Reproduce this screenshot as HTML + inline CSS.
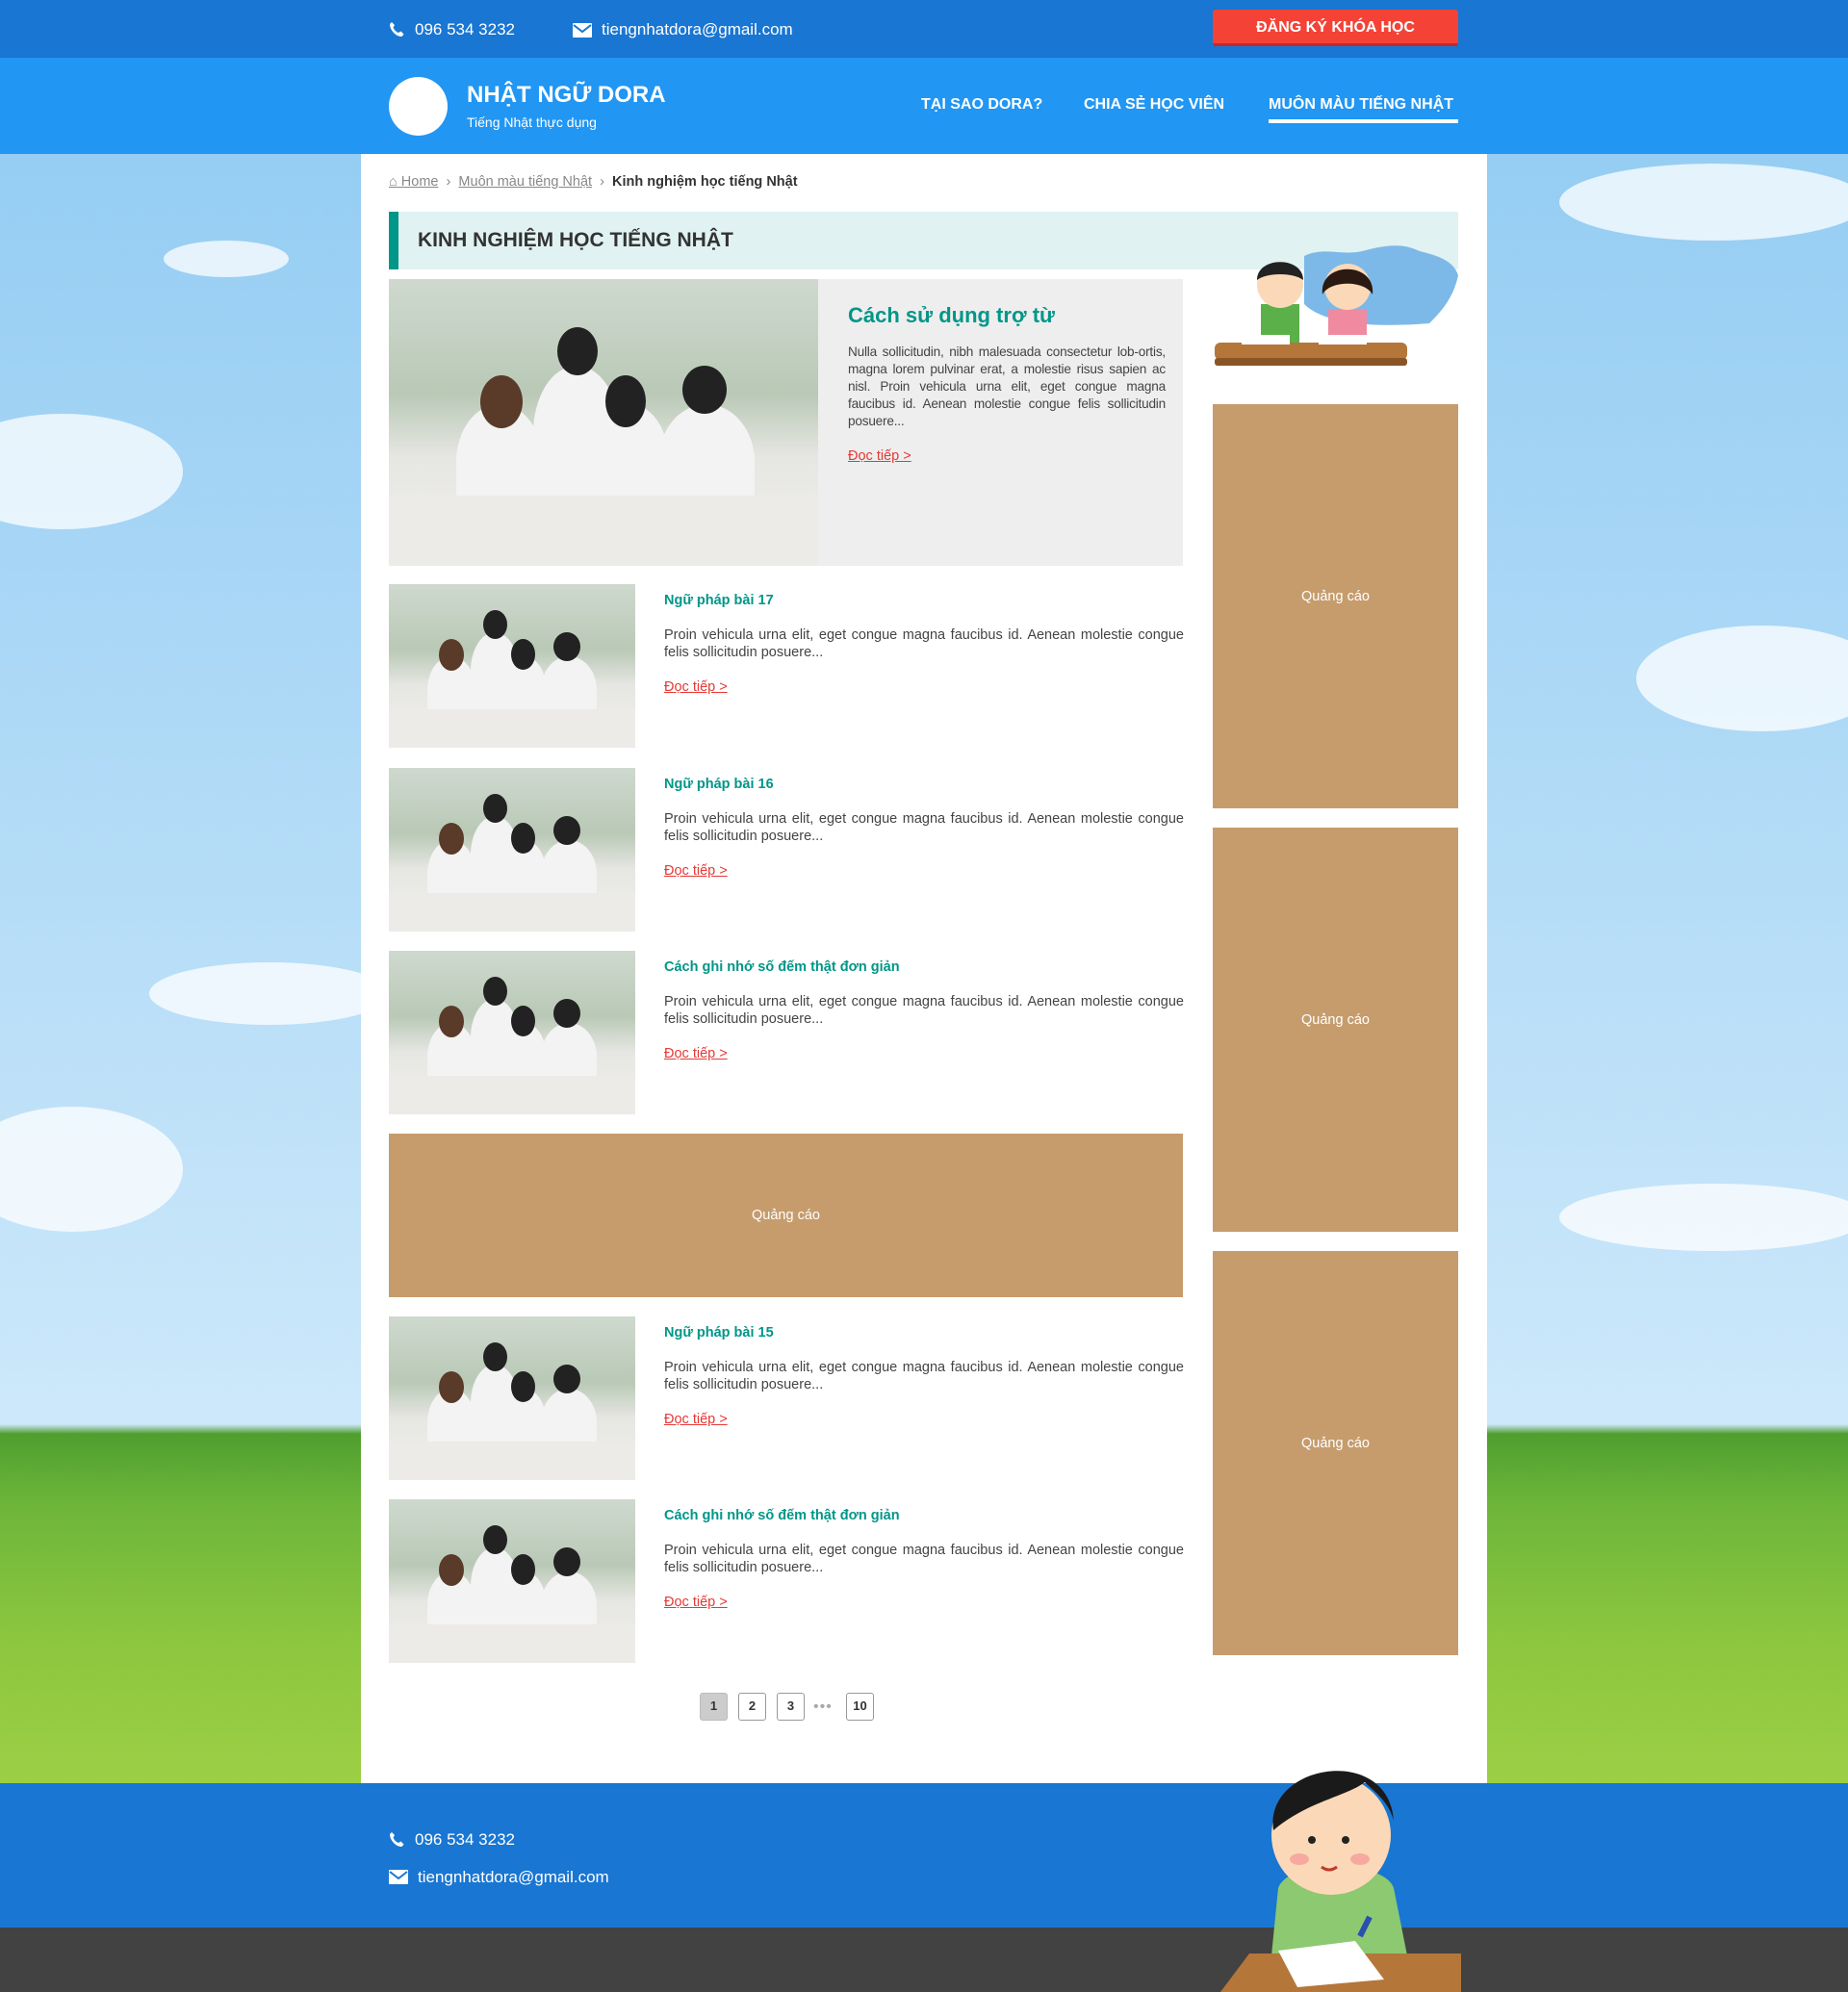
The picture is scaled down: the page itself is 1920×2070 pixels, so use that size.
<!DOCTYPE html>
<html><head><meta charset="utf-8"><style>
*{margin:0;padding:0;box-sizing:border-box}
body{width:1920px;height:2070px;position:relative;overflow:hidden;font-family:"Liberation Sans",sans-serif;background:linear-gradient(#8fcaf2 0,#b4dcf7 900px,#cde8fa 1480px,#4f9e2f 1490px,#6cb53a 1560px,#8cc63f 1700px,#9ccf45 1853px)}
.abs{position:absolute}
.cloud{position:absolute;background:#fff;border-radius:50%;opacity:.75}
.top{left:0;top:0;width:1920px;height:60px;background:#1976d2;color:#fff;font-size:17px}
.hdr{left:0;top:60px;width:1920px;height:100px;background:#2196f3;color:#fff}
.wrap{left:375px;top:160px;width:1170px;height:1693px;background:#fff}
.btn{left:1260px;top:10px;width:255px;height:38px;background:#f44336;border-bottom:3px solid #c62828;border-radius:3px;color:#fff;font-weight:bold;font-size:16px;text-align:center;line-height:38px}
.nav{top:100px;font-size:16px;font-weight:bold;color:#fff}
.photo{background:linear-gradient(180deg,#cfd9cf 0,#b9c9b6 40%,#e6e6e2 62%,#f1f0ec 100%);overflow:hidden}
.photo .p{position:absolute;border-radius:50% 50% 10% 10%;background:#f3f3f3}
.photo .h{position:absolute;border-radius:50%;background:#222}
.t{color:#009688;font-weight:bold}
.para{color:#444;font-size:14.5px;line-height:18px}
.more{color:#e53935;text-decoration:underline;font-size:14.5px}
.ad{background:#c69c6d;color:#fff;font-size:14.5px;display:flex;align-items:center;justify-content:center}
.pg{top:1759px;width:29px;height:29px;border:1.5px solid #999;border-radius:3px;font-size:13px;font-weight:bold;color:#333;text-align:center;line-height:26px}
</style></head><body>
<div class="cloud" style="left:170px;top:250px;width:130px;height:38px"></div>
<div class="cloud" style="left:-60px;top:430px;width:250px;height:120px"></div>
<div class="cloud" style="left:155px;top:1000px;width:250px;height:65px"></div>
<div class="cloud" style="left:-40px;top:1150px;width:230px;height:130px"></div>
<div class="cloud" style="left:1620px;top:170px;width:320px;height:80px"></div>
<div class="cloud" style="left:1700px;top:650px;width:260px;height:110px"></div>
<div class="cloud" style="left:1620px;top:1230px;width:320px;height:70px"></div>

<div class="abs top">
 <svg class="abs" style="left:404px;top:22px" width="16" height="17" viewBox="0 0 16 17"><path d="M3 1l3 3-1.5 2.5c1 2.5 3 4.5 5.5 5.5L12.5 10.5l3 3-2 2.5C7 16 1 9 1 3z" fill="#fff"/></svg>
 <div class="abs" style="left:431px;top:21px">096 534 3232</div>
 <svg class="abs" style="left:595px;top:24px" width="20" height="15" viewBox="0 0 20 15"><rect width="20" height="15" rx="1" fill="#fff"/><path d="M1 2l9 7 9-7" stroke="#1976d2" stroke-width="2" fill="none"/></svg>
 <div class="abs" style="left:625px;top:21px">tiengnhatdora@gmail.com</div>
 <div class="abs btn">ĐĂNG KÝ KHÓA HỌC</div>
</div>
<div class="abs hdr">
 <div class="abs" style="left:404px;top:20px;width:61px;height:61px;border-radius:50%;background:#fff"></div>
 <div class="abs" style="left:485px;top:25px;font-size:24px;font-weight:bold">NHẬT NGỮ DORA</div>
 <div class="abs" style="left:485px;top:59px;font-size:14px">Tiếng Nhật thực dụng</div>
</div>
<div class="abs nav" style="left:957px">TẠI SAO DORA?</div>
<div class="abs nav" style="left:1126px">CHIA SẺ HỌC VIÊN</div>
<div class="abs nav" style="left:1318px">MUÔN MÀU TIẾNG NHẬT</div>
<div class="abs" style="left:1318px;top:124px;width:197px;height:4px;background:#fff"></div>

<div class="abs wrap"></div>
<div class="abs" style="left:404px;top:181px;font-size:14.5px;color:#888"><span style="text-decoration:underline">⌂ Home</span> &nbsp;›&nbsp; <span style="text-decoration:underline">Muôn màu tiếng Nhật</span> &nbsp;›&nbsp; <span style="color:#333;font-weight:bold">Kinh nghiệm học tiếng Nhật</span></div>
<div class="abs" style="left:404px;top:220px;width:1111px;height:60px;background:#e0f2f1;border-left:10px solid #009688"></div>
<div class="abs" style="left:434px;top:238px;font-size:21px;font-weight:bold;color:#333">KINH NGHIỆM HỌC TIẾNG NHẬT</div>
<svg class="abs" style="left:1260px;top:236px" width="255" height="158" viewBox="0 0 255 158">
<path d="M95 30c20-10 40 0 60-5s40-10 60 0c20 5 35 10 40 25-5 25-20 40-30 50-60 5-110 0-130-20z" fill="#7cb9e8"/>
<rect x="2" y="120" width="200" height="18" rx="6" fill="#b5763a"/><rect x="2" y="136" width="200" height="8" rx="3" fill="#8a5526"/>
<path d="M50 80h40v40H50z" fill="#5bb04a"/><circle cx="70" cy="60" r="24" fill="#fbd9b8"/><path d="M46 55c0-25 48-25 48 0-10-8-38-8-48 0z" fill="#222"/>
<path d="M120 85h40v35h-40z" fill="#f08aa0"/><circle cx="140" cy="62" r="24" fill="#fbd9b8"/><path d="M114 70c-4-35 56-35 52 0-8-15-44-15-52 0z" fill="#2a1a12"/>
<rect x="30" y="112" width="50" height="10" fill="#fff"/><rect x="110" y="112" width="50" height="10" fill="#fff"/>
</svg>
<div class="abs photo" style="left:404px;top:290px;width:446px;height:298px">
 <div class="p" style="left:70px;top:130px;width:90px;height:120px"></div><div class="h" style="left:95px;top:100px;width:44px;height:55px;background:#5a3a28"></div>
 <div class="p" style="left:150px;top:90px;width:90px;height:140px"></div><div class="h" style="left:175px;top:50px;width:42px;height:50px"></div>
 <div class="p" style="left:210px;top:130px;width:80px;height:110px"></div><div class="h" style="left:225px;top:100px;width:42px;height:54px"></div>
 <div class="p" style="left:280px;top:130px;width:100px;height:120px"></div><div class="h" style="left:305px;top:90px;width:46px;height:50px"></div>
 <div class="abs" style="left:0;top:225px;width:446px;height:73px;background:#ecebe7"></div>
</div>
<div class="abs" style="left:850px;top:290px;width:379px;height:298px;background:#eee"></div>
<div class="abs t" style="left:881px;top:315px;font-size:22px">Cách sử dụng trợ từ</div>
<div class="abs para" style="left:881px;top:357px;width:330px;text-align:justify;font-size:13.6px;letter-spacing:-0.2px">Nulla sollicitudin, nibh malesuada consectetur lob-ortis, magna lorem pulvinar erat, a molestie risus sapien ac nisl. Proin vehicula urna elit, eget congue magna faucibus id. Aenean molestie congue felis sollicitudin posuere...</div>
<div class="abs more" style="left:881px;top:466px">Đọc tiếp &gt;</div>

<div id="items"></div>
<script>
var tops=[607,798,988,1368,1558],titles=["Ngữ pháp bài 17","Ngữ pháp bài 16","Cách ghi nhớ số đếm thật đơn giản","Ngữ pháp bài 15","Cách ghi nhớ số đếm thật đơn giản"],h="";
tops.forEach(function(t,i){
h+='<div class="abs photo" style="left:404px;top:'+t+'px;width:256px;height:170px"><div class="p" style="left:40px;top:75px;width:50px;height:70px"></div><div class="h" style="left:52px;top:57px;width:26px;height:33px;background:#5a3a28"></div><div class="p" style="left:85px;top:50px;width:50px;height:80px"></div><div class="h" style="left:98px;top:27px;width:25px;height:30px"></div><div class="p" style="left:118px;top:75px;width:45px;height:65px"></div><div class="h" style="left:127px;top:57px;width:25px;height:32px"></div><div class="p" style="left:158px;top:75px;width:58px;height:70px"></div><div class="h" style="left:171px;top:50px;width:28px;height:30px"></div><div class="abs" style="left:0;top:130px;width:256px;height:40px;background:#ecebe7"></div></div>';
h+='<div class="abs t" style="left:690px;top:'+(t+9)+'px;font-size:14.5px">'+titles[i]+'</div>';
h+='<div class="abs para" style="left:690px;top:'+(t+44)+'px;width:540px;text-align:justify">Proin vehicula urna elit, eget congue magna faucibus id. Aenean molestie congue felis sollicitudin posuere...</div>';
h+='<div class="abs more" style="left:690px;top:'+(t+99)+'px">Đọc tiếp &gt;</div>';});
document.getElementById("items").innerHTML=h;
</script>
<div class="abs ad" style="left:404px;top:1178px;width:825px;height:170px">Quảng cáo</div>
<div class="abs ad" style="left:1260px;top:420px;width:255px;height:420px;padding-bottom:20px">Quảng cáo</div>
<div class="abs ad" style="left:1260px;top:860px;width:255px;height:420px;padding-bottom:20px">Quảng cáo</div>
<div class="abs ad" style="left:1260px;top:1300px;width:255px;height:420px;padding-bottom:20px">Quảng cáo</div>

<div class="abs pg" style="left:727px;background:#ccc;border-color:#bbb">1</div>
<div class="abs pg" style="left:767px">2</div>
<div class="abs pg" style="left:807px">3</div>
<div class="abs" style="left:845px;top:1765px;color:#aaa;font-size:16px;letter-spacing:1px">•••</div>
<div class="abs pg" style="left:879px">10</div>

<div class="abs" style="left:0;top:1853px;width:1920px;height:150px;background:#1976d2"></div>
<div class="abs" style="left:0;top:2003px;width:1920px;height:67px;background:#424242"></div>
<svg class="abs" style="left:404px;top:1903px" width="16" height="17" viewBox="0 0 16 17"><path d="M3 1l3 3-1.5 2.5c1 2.5 3 4.5 5.5 5.5L12.5 10.5l3 3-2 2.5C7 16 1 9 1 3z" fill="#fff"/></svg>
<div class="abs" style="left:431px;top:1902px;color:#fff;font-size:17px">096 534 3232</div>
<svg class="abs" style="left:404px;top:1943px" width="20" height="15" viewBox="0 0 20 15"><rect width="20" height="15" rx="1" fill="#fff"/><path d="M1 2l9 7 9-7" stroke="#1976d2" stroke-width="2" fill="none"/></svg>
<div class="abs" style="left:434px;top:1941px;color:#fff;font-size:17px">tiengnhatdora@gmail.com</div>
<svg class="abs" style="left:1268px;top:1812px" width="250" height="258" viewBox="0 0 250 258">
<path d="M60 150c10-30 110-30 120 0l20 100H50z" fill="#8cc970"/>
<circle cx="115" cy="95" r="62" fill="#fbd9b8"/>
<path d="M55 90c-10-70 120-90 125-10-5-20-20-30-30-40-20 15-60 20-95 50z" fill="#1a1a1a"/>
<circle cx="95" cy="100" r="4" fill="#222"/><circle cx="130" cy="100" r="4" fill="#222"/>
<ellipse cx="82" cy="120" rx="10" ry="6" fill="#f6a9a0"/><ellipse cx="145" cy="120" rx="10" ry="6" fill="#f6a9a0"/>
<path d="M105 128q8 6 16 0" stroke="#c0392b" stroke-width="3" fill="none"/>
<path d="M0 258l30-40h220v40z" fill="#b5763a"/><path d="M60 215l80-10 30 40-90 8z" fill="#fff"/>
<path d="M145 200l10-20" stroke="#2a4fb0" stroke-width="6"/>
</svg>
</body></html>
